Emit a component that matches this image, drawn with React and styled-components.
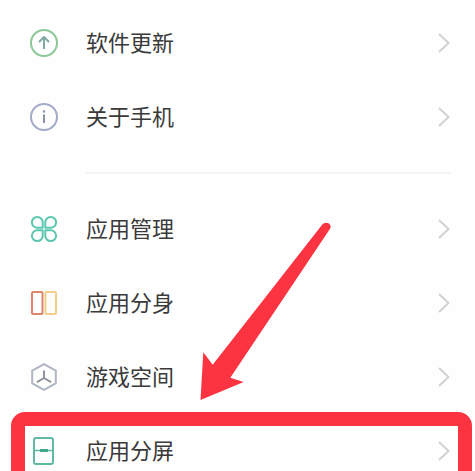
import React from 'react';
import styled, { createGlobalStyle } from 'styled-components';

const GlobalStyle = createGlobalStyle`
  * {
    box-sizing: border-box;
  }
  body {
    margin: 0;
    background: #fefefe;
    font-family: 'Noto Sans CJK SC', sans-serif;
  }
`;

const ScreenStyles = styled.main`
  height: 100vh;
  overflow: hidden;
  padding-top: 6px;
`;

const Group = styled.ul`
  list-style: none;
  margin: 0;
  padding: 0;
`;

const Item = styled.li`
  position: relative;
`;

const Row = styled.button`
  display: flex;
  align-items: center;
  gap: 28px;
  width: 100%;
  height: 74px;
  padding: 0 24px 0 30px;
  border: 0;
  background: transparent;
  color: #3a3a3a;
  font-family: inherit;
  font-size: 22px;
  line-height: 32px;
  text-align: left;
  cursor: pointer;
`;

const Label = styled.span`
  flex: 1;
  padding-bottom: 4px;
`;

const Icon = styled.svg`
  width: 28px;
  height: 28px;
  flex: none;
  fill: none;
  stroke: ${({ $color }) => $color};
  stroke-width: 2;
  stroke-linejoin: round;
`;

const Chevron = styled.svg`
  width: 14px;
  height: 20px;
  flex: none;
  fill: none;
  stroke: #d2d2d2;
  stroke-width: 2;
`;

const Divider = styled.hr`
  height: 2px;
  margin: 18px 24px 18px 86px;
  border: 0;
  background: #f3f3f3;
`;

const Highlight = styled.div`
  position: absolute;
  inset: -2px 3px -14px 11px;
  border: 14px solid #fc3441;
  border-radius: 14px;
  pointer-events: none;
`;

const Arrow = styled.svg`
  position: absolute;
  left: 200px;
  bottom: calc(100% + 12px);
  width: 132px;
  height: 180px;
  fill: #fc3441;
  pointer-events: none;
`;

const UpdateIcon = () => (
  <Icon viewBox="0 0 28 28" $color="#8cc797" aria-hidden="true">
    <circle cx="14" cy="14" r="13" />
    <path d="M14 20V8.5M9 13l5-5 5 5" stroke="#7fa9a2" />
  </Icon>
);

const AboutIcon = () => (
  <Icon viewBox="0 0 28 28" $color="#a3abc9" aria-hidden="true">
    <circle cx="14" cy="14" r="13" />
    <path d="M14 11.500V20" stroke="#8791a3" />
    <circle cx="14" cy="8.5" r="1.2" fill="#8791a3" stroke="none" />
  </Icon>
);

const ManageIcon = () => (
  <Icon viewBox="0 0 28 28" $color="#5ac7ae" aria-hidden="true">
    <path d="M12.7 12.7V7.3a5.4 5.4 0 1 0-5.4 5.4z" />
    <path d="M15.3 12.7V7.3a5.4 5.4 0 1 1 5.4 5.4z" />
    <path d="M12.7 15.3v5.4a5.4 5.4 0 1 1-5.4-5.4z" />
    <path d="M15.3 15.3v5.4a5.4 5.4 0 1 0 5.4-5.4z" />
  </Icon>
);

const CloneIcon = () => (
  <Icon viewBox="0 0 28 28" $color="#df8468" aria-hidden="true">
    <rect x="2" y="3" width="10.5" height="22" rx="1" />
    <rect x="15.5" y="3" width="10.5" height="22" rx="1" stroke="#f1cf88" />
  </Icon>
);

const GameIcon = () => (
  <Icon viewBox="0 0 28 28" $color="#b0b5c3" aria-hidden="true">
    <path d="M14 1.2l11.8 6.5v12.6L14 26.8 2.2 20.3V7.7z" />
    <path d="M14 7.5V15M14 15l-7 4.2M14 15l7 4.2" stroke="#8d929f" />
  </Icon>
);

const SplitIcon = () => (
  <Icon viewBox="0 0 28 28" $color="#5fb9a3" aria-hidden="true">
    <rect x="4" y="1" width="19" height="26" rx="2" />
    <path d="M4 13.500h19" strokeWidth="1.5" />
    <path d="M10 13.500h8" stroke="#43a58d" strokeWidth="3" />
  </Icon>
);

const systemItems = [
  { label: '软件更新', icon: UpdateIcon },
  { label: '关于手机', icon: AboutIcon },
];

const appItems = [
  { label: '应用管理', icon: ManageIcon },
  { label: '应用分身', icon: CloneIcon },
  { label: '游戏空间', icon: GameIcon },
  { label: '应用分屏', icon: SplitIcon, marked: true },
];

function SettingItem({ label, icon: ItemIcon, marked }) {
  return (
    <Item>
      <Row type="button">
        <ItemIcon />
        <Label>{label}</Label>
        <Chevron viewBox="0 0 14 20" aria-hidden="true">
          <path d="M2 1l9.500 9L2 19" />
        </Chevron>
      </Row>
      {marked && (
        <>
          <Highlight />
          <Arrow viewBox="0 0 132 180" aria-hidden="true">
            <path d="M0.500 178L3.300 130.300 12.700 142.700 122.500 2.300Q125-.5 129 1.500 132 4 129.700 7.300L30.300 155.700 43.700 160z" />
          </Arrow>
        </>
      )}
    </Item>
  );
}

export default function App() {
  return (
    <>
      <GlobalStyle />
      <ScreenStyles>
        <Group>
          {systemItems.map((item) => (
            <SettingItem key={item.label} {...item} />
          ))}
        </Group>
        <Divider />
        <Group>
          {appItems.map((item) => (
            <SettingItem key={item.label} {...item} />
          ))}
        </Group>
      </ScreenStyles>
    </>
  );
}
